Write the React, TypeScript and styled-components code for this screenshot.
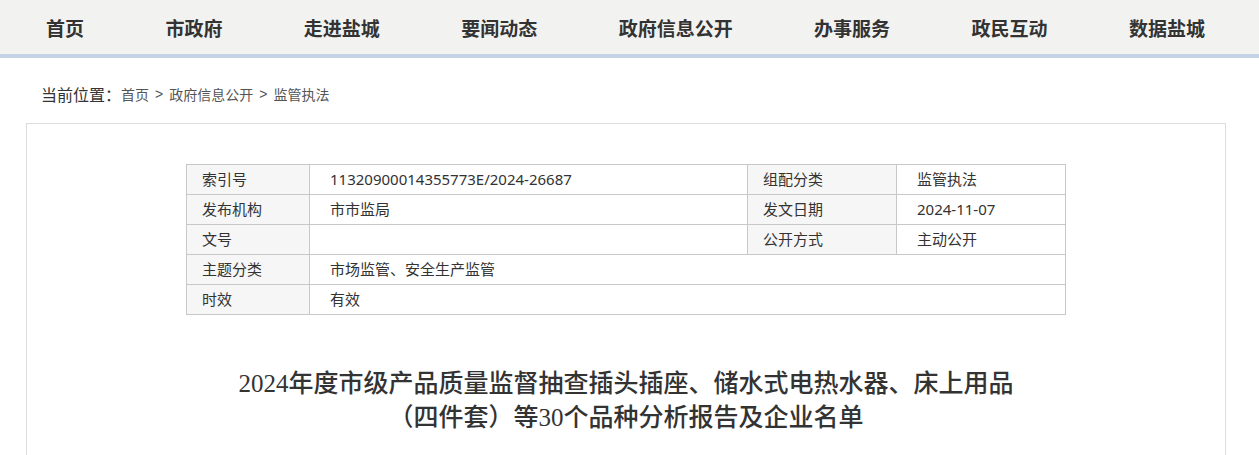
import React from 'react';
import styled, { createGlobalStyle } from 'styled-components';

const GlobalStyle = createGlobalStyle`
    body {
        margin: 0;
        background: #fff;
        font-family: "Liberation Sans", "Noto Sans CJK SC", sans-serif;
        color: #333;
    }
`;

const NavBar = styled.nav`
    height: 54px;
    background: #f2f2f1;
    border-bottom: 4px solid #c5d2e6;
    display: flex;
    align-items: center;
    justify-content: space-between;
    padding: 0 54px 0 46px;
`;

const NavItem = styled.a`
    font-size: 19px;
    font-weight: 700;
    color: #333;
    text-decoration: none;
    line-height: 1;
    margin-top: 4px;
`;

const Container = styled.div`
    width: 1200px;
    margin-left: 26px;
`;

const Breadcrumb = styled.div`
    display: flex;
    align-items: center;
    height: 65px;
    padding-left: 15px;
    padding-top: 7px;
    box-sizing: border-box;
`;

const Here = styled.span`
    font-size: 16px;
    color: #333;
`;

const Crumb = styled.a`
    font-size: 14px;
    color: #555;
    text-decoration: none;
`;

const Sep = styled.span`
    font-size: 14px;
    color: #555;
    margin: 0 6px;
`;

const Card = styled.div`
    border: 1px solid #ddd;
    min-height: 400px;
    padding-top: 40px;
    display: flex;
    flex-direction: column;
    align-items: center;
`;

const InfoTable = styled.table`
    width: 880px;
    border-collapse: collapse;
    font-family: "Noto Sans", "Noto Sans CJK SC", sans-serif;
    font-size: 15px;
    color: #333;
`;

const Label = styled.td<{ $w: number }>`
    width: ${(p) => p.$w}px;
    height: 30px;
    background: #f6f6f6;
    border: 1px solid #c8c8c8;
    padding: 0 0 0 15px;
    box-sizing: border-box;
    line-height: 1;
`;

const Value = styled.td<{ $w?: number }>`
    ${(p) => (p.$w ? `width: ${p.$w}px;` : '')}
    height: 30px;
    border: 1px solid #c8c8c8;
    padding: 0 0 0 20px;
    box-sizing: border-box;
    line-height: 1;
`;

const Title = styled.h1`
    margin: 52px 0 0;
    font-family: "Liberation Serif", "Noto Sans CJK SC", serif;
    font-size: 25px;
    font-weight: 500;
    line-height: 34px;
    color: #333;
    text-align: center;
`;

const navItems = ['首页', '市政府', '走进盐城', '要闻动态', '政府信息公开', '办事服务', '政民互动', '数据盐城'];

export default function App() {
    return (
        <>
            <GlobalStyle />
            <NavBar>
                {navItems.map((n) => (
                    <NavItem key={n}>{n}</NavItem>
                ))}
            </NavBar>
            <Container>
                <Breadcrumb>
                    <Here>当前位置：</Here>
                    <Crumb>首页</Crumb>
                    <Sep>&gt;</Sep>
                    <Crumb>政府信息公开</Crumb>
                    <Sep>&gt;</Sep>
                    <Crumb>监管执法</Crumb>
                </Breadcrumb>
                <Card>
                    <InfoTable>
                        <tbody>
                            <tr>
                                <Label $w={123}>索引号</Label>
                                <Value $w={438}>11320900014355773E/2024-26687</Value>
                                <Label $w={149}>组配分类</Label>
                                <Value>监管执法</Value>
                            </tr>
                            <tr>
                                <Label $w={123}>发布机构</Label>
                                <Value>市市监局</Value>
                                <Label $w={149}>发文日期</Label>
                                <Value>2024-11-07</Value>
                            </tr>
                            <tr>
                                <Label $w={123}>文号</Label>
                                <Value></Value>
                                <Label $w={149}>公开方式</Label>
                                <Value>主动公开</Value>
                            </tr>
                            <tr>
                                <Label $w={123}>主题分类</Label>
                                <Value colSpan={3}>市场监管、安全生产监管</Value>
                            </tr>
                            <tr>
                                <Label $w={123}>时效</Label>
                                <Value colSpan={3}>有效</Value>
                            </tr>
                        </tbody>
                    </InfoTable>
                    <Title>
                        2024年度市级产品质量监督抽查插头插座、储水式电热水器、床上用品
                        <br />
                        （四件套）等30个品种分析报告及企业名单
                    </Title>
                </Card>
            </Container>
        </>
    );
}
